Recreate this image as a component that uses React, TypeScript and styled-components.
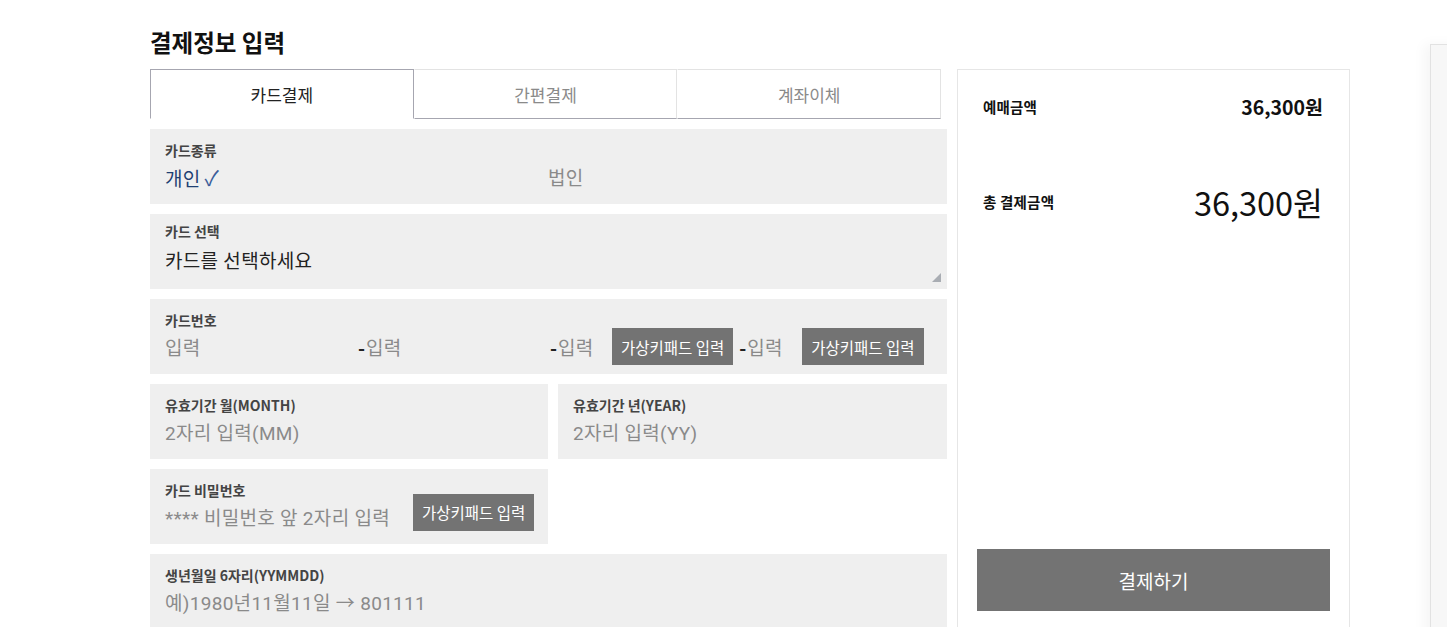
import styled, { createGlobalStyle } from 'styled-components';

const GlobalStyle = createGlobalStyle`
  html, body {
    margin: 0;
    padding: 0;
    background: #fff;
    font-family: "Noto Sans CJK KR", "Noto Sans", sans-serif;
    color: #222;
  }
  * { box-sizing: border-box; }
`;

const Page = styled.div`
  display: flex;
  gap: 10px;
  padding: 26px 0 0 150px;
  align-items: flex-start;
`;

const Main = styled.div`
  width: 797px;
  display: flex;
  flex-direction: column;
`;

const Heading = styled.h2`
  margin: 0 0 11px;
  font-size: 23.5px;
  line-height: 32px;
  font-weight: 700;
  color: #111;
`;

const Tabs = styled.div`
  display: flex;
  width: 791px;
  height: 50px;
  margin-bottom: 10px;
`;

const Tab = styled.div<{ $active?: boolean }>`
  flex: 1;
  display: flex;
  align-items: center;
  justify-content: center;
  font-size: 17px;
  color: ${({ $active }) => ($active ? '#222' : '#8a8a8a')};
  border-top: 1px solid ${({ $active }) => ($active ? '#a6a6b0' : '#e3e3e3')};
  border-left: 1px solid ${({ $active }) => ($active ? '#a6a6b0' : 'transparent')};
  border-right: 1px solid ${({ $active }) => ($active ? '#a6a6b0' : '#e3e3e3')};
  border-bottom: 1px solid ${({ $active }) => ($active ? 'transparent' : '#a6a6b0')};
  &:last-child { border-right-color: #e3e3e3; }
`;

const Fields = styled.div`
  display: grid;
  grid-template-columns: 398px 389px;
  gap: 10px;
`;

const Field = styled.div<{ $span?: boolean; $pt?: number }>`
  grid-column: ${({ $span }) => ($span ? '1 / -1' : 'auto')};
  position: relative;
  height: 75px;
  background: #efefef;
  padding: ${({ $pt }) => $pt ?? 12}px 15px 0;
`;

const Label = styled.div`
  font-size: 14px;
  line-height: 18px;
  font-weight: 700;
  color: #444;
`;

const Row = styled.div<{ $h?: number }>`
  display: flex;
  align-items: center;
  height: ${({ $h }) => $h ?? 35}px;
`;

const Value = styled.span<{ $tone?: 'muted' | 'dark' | 'navy'; $width?: number }>`
  font-family: Roboto, "Noto Sans CJK KR", sans-serif;
  font-size: 19px;
  letter-spacing: 0.3px;
  color: ${({ $tone }) => ($tone === 'dark' ? '#222' : $tone === 'navy' ? '#1f3f73' : '#8a8a8a')};
  width: ${({ $width }) => ($width ? `${$width}px` : 'auto')};
  flex-shrink: 0;
  white-space: nowrap;
`;

const Dash = styled.span<{ $ml?: number }>`
  width: 8px;
  margin-left: ${({ $ml }) => $ml ?? 0}px;
  flex-shrink: 0;
  font-size: 19px;
  font-weight: 700;
  color: #222;
`;

const Check = styled.span`
  color: #3b5d9a;
  margin-left: 4px;
  font-size: 21px;
`;

const KeypadButton = styled.button<{ $ml?: number; $raise?: number }>`
  height: 37px;
  padding: 0 9px;
  margin-left: ${({ $ml }) => $ml ?? 0}px;
  margin-bottom: ${({ $raise }) => $raise ?? 0}px;
  border: none;
  background: #737373;
  color: #fff;
  font-family: inherit;
  font-size: 15.5px;
  white-space: nowrap;
  flex-shrink: 0;
`;

const Resize = styled.div`
  position: absolute;
  right: 6px;
  bottom: 7px;
  width: 0;
  height: 0;
  border-left: 9px solid transparent;
  border-bottom: 9px solid #a9adb3;
`;

const Summary = styled.aside`
  width: 393px;
  height: 620px;
  margin-top: 43px;
  border: 1px solid #e6e6e6;
  display: flex;
  flex-direction: column;
  padding: 0 19px;
`;

const SumRow = styled.div<{ $h: number }>`
  display: flex;
  justify-content: space-between;
  align-items: center;
  height: ${({ $h }) => $h}px;
  padding: 0 7px 0 6px;
`;

const SumLabel = styled.span`
  font-size: 14.5px;
  font-weight: 700;
  letter-spacing: 0.2px;
  color: #111;
`;

const Price = styled.span<{ $big?: boolean }>`
  font-size: ${({ $big }) => ($big ? '32.5px' : '19.5px')};
  font-weight: ${({ $big }) => ($big ? 400 : 700)};
  color: #111;
`;

const PayButton = styled.button`
  margin-top: 289px;
  height: 62px;
  width: 100%;
  border: none;
  background: #737373;
  color: #fff;
  font-family: inherit;
  font-size: 19px;
`;

const SideRail = styled.div`
  position: fixed;
  top: 44px;
  left: 1430px;
  width: 40px;
  height: 700px;
  background: #f7f7f7;
  border: 1px solid #e2e2e2;
  box-shadow: -6px 0 12px rgba(0, 0, 0, 0.04);
`;

export default function App() {
  return (
    <>
      <GlobalStyle />
      <Page>
        <Main>
          <Heading>결제정보 입력</Heading>
          <Tabs>
            <Tab $active>카드결제</Tab>
            <Tab>간편결제</Tab>
            <Tab>계좌이체</Tab>
          </Tabs>
          <Fields>
            <Field $span>
              <Label>카드종류</Label>
              <Row>
                <Value $tone="navy" $width={383}>
                  개인<Check>✓</Check>
                </Value>
                <Value>법인</Value>
              </Row>
            </Field>
            <Field $span $pt={8}>
              <Label>카드 선택</Label>
              <Row $h={38}>
                <Value $tone="dark">카드를 선택하세요</Value>
              </Row>
              <Resize />
            </Field>
            <Field $span>
              <Label>카드번호</Label>
              <Row>
                <Value $width={193}>입력</Value>
                <Dash>-</Dash>
                <Value $width={184}>입력</Value>
                <Dash>-</Dash>
                <Value $width={54}>입력</Value>
                <KeypadButton>가상키패드 입력</KeypadButton>
                <Dash $ml={6}>-</Dash>
                <Value $width={55}>입력</Value>
                <KeypadButton>가상키패드 입력</KeypadButton>
              </Row>
            </Field>
            <Field>
              <Label>유효기간 월(MONTH)</Label>
              <Row>
                <Value>2자리 입력(MM)</Value>
              </Row>
            </Field>
            <Field>
              <Label>유효기간 년(YEAR)</Label>
              <Row>
                <Value>2자리 입력(YY)</Value>
              </Row>
            </Field>
            <Field>
              <Label>카드 비밀번호</Label>
              <Row>
                <Value $width={248}>**** 비밀번호 앞 2자리 입력</Value>
                <KeypadButton $raise={9}>가상키패드 입력</KeypadButton>
              </Row>
            </Field>
            <div />
            <Field $span>
              <Label>생년월일 6자리(YYMMDD)</Label>
              <Row>
                <Value>예)1980년11월11일 → 801111</Value>
              </Row>
            </Field>
          </Fields>
        </Main>
        <Summary>
          <SumRow $h={72}>
            <SumLabel>예매금액</SumLabel>
            <Price>36,300원</Price>
          </SumRow>
          <SumRow $h={118}>
            <SumLabel>총 결제금액</SumLabel>
            <Price $big>36,300원</Price>
          </SumRow>
          <PayButton>결제하기</PayButton>
        </Summary>
      </Page>
      <SideRail />
    </>
  );
}
